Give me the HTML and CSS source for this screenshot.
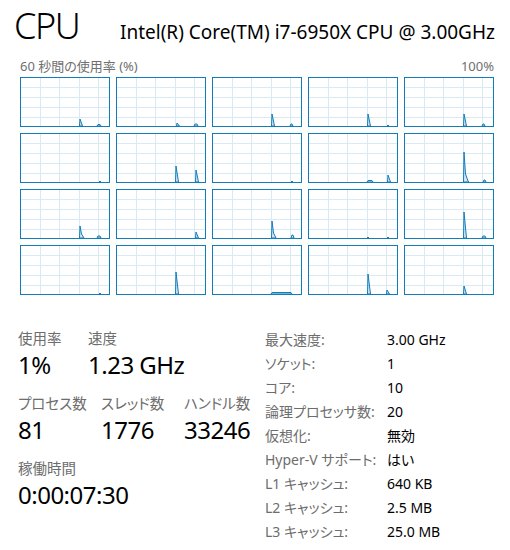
FILE: index.html
```html
<!DOCTYPE html>
<html lang="ja">
<head>
<meta charset="utf-8">
<title>CPU</title>
<link rel="stylesheet" href="styles.css">
</head>
<body>
<div class="page">
  <header class="head">
    <h1 class="title">CPU</h1>
    <div class="model">Intel(R) Core(TM) i7-6950X CPU @ 3.00GHz</div>
  </header>
  <div class="axis"><span>60 秒間の使用率 (%)</span><span>100%</span></div>
  <div class="charts">
    <div class="chart"><svg viewBox="0 0 88 48"><path d="M58.5 48L59 41L61.5 48Z M76 48L77 46.5L79 46.5L80 48Z"/></svg></div>
    <div class="chart"><svg viewBox="0 0 88 48"><path d="M59.5 48L60 45L62.5 48Z M77 48L78 46L80 46L81 48Z"/></svg></div>
    <div class="chart"><svg viewBox="0 0 88 48"><path d="M58.5 48L59 36L61.5 48Z M77 48L78 46L79 46L80 48Z"/></svg></div>
    <div class="chart"><svg viewBox="0 0 88 48"><path d="M58.5 48L59 36L61.5 48Z M78 48L79 47L80 48Z"/></svg></div>
    <div class="chart"><svg viewBox="0 0 88 48"><path d="M58.5 48L59 36L61.5 48Z M77 48L78 46L79 46L80 48Z"/></svg></div>

    <div class="chart"><svg viewBox="0 0 88 48"><path d="M78 48L79 47L80 48Z"/></svg></div>
    <div class="chart"><svg viewBox="0 0 88 48"><path d="M58.5 48L59 32L61.5 48Z M78.5 48L79 36L81.5 48Z"/></svg></div>
    <div class="chart"><svg viewBox="0 0 88 48"><path d="M78 48L79 47L80 48Z"/></svg></div>
    <div class="chart"><svg viewBox="0 0 88 48"><path d="M58 48L59 46.5L63 46.5L64 48Z M78.5 48L79 41L81.5 48Z"/></svg></div>
    <div class="chart"><svg viewBox="0 0 88 48"><path d="M58.5 48L59 18L60.5 40L63 47L64 48Z M78 48L79 46L80 46L81 48Z"/></svg></div>

    <div class="chart"><svg viewBox="0 0 88 48"><path d="M58.5 48L59 36L60.5 44L63 48Z M76 48L77 46L79 46L80 48Z"/></svg></div>
    <div class="chart"><svg viewBox="0 0 88 48"><path d="M78.5 48L79 42L81.5 48Z"/></svg></div>
    <div class="chart"><svg viewBox="0 0 88 48"><path d="M58.5 48L59 31L60.5 43L63 48Z M78 48L79 45L80 45L81 48Z"/></svg></div>
    <div class="chart"><svg viewBox="0 0 88 48"><path d="M58 48L59 47L60 48Z M78 48L79 47L80 48Z"/></svg></div>
    <div class="chart"><svg viewBox="0 0 88 48"><path d="M58.5 48L59 22L61.5 48Z M77 48L78 46L80 46L81 48Z"/></svg></div>

    <div class="chart"><svg viewBox="0 0 88 48"><path d="M78 48L79 47L80 48Z"/></svg></div>
    <div class="chart"><svg viewBox="0 0 88 48"><path d="M58.5 48L59 26L61.5 48Z"/></svg></div>
    <div class="chart"><svg viewBox="0 0 88 48"><path d="M58 48L59 46.5L78 46.5L79 48Z"/></svg></div>
    <div class="chart"><svg viewBox="0 0 88 48"><path d="M58.5 48L59 28L61.5 48Z M77.5 48L78 44L80.5 48Z"/></svg></div>
    <div class="chart"><svg viewBox="0 0 88 48"><path d="M58.5 48L59 40L61.5 48Z"/></svg></div>
  </div>

  <section class="stats">
    <div class="dyn">
      <div class="group">
        <div class="stat w70"><div class="lbl">使用率</div><div class="val">1%</div></div>
        <div class="stat"><div class="lbl">速度</div><div class="val">1.23 GHz</div></div>
      </div>
      <div class="group">
        <div class="stat w83"><div class="lbl">プロセス数</div><div class="val">81</div></div>
        <div class="stat w83"><div class="lbl">スレッド数</div><div class="val">1776</div></div>
        <div class="stat"><div class="lbl">ハンドル数</div><div class="val">33246</div></div>
      </div>
      <div class="group">
        <div class="stat"><div class="lbl">稼働時間</div><div class="val">0:00:07:30</div></div>
      </div>
    </div>
    <dl class="specs">
      <dt>最大速度:</dt><dd>3.00 GHz</dd>
      <dt>ソケット:</dt><dd>1</dd>
      <dt>コア:</dt><dd>10</dd>
      <dt>論理プロセッサ数:</dt><dd>20</dd>
      <dt>仮想化:</dt><dd>無効</dd>
      <dt>Hyper-V サポート:</dt><dd>はい</dd>
      <dt>L1 キャッシュ:</dt><dd>640 KB</dd>
      <dt>L2 キャッシュ:</dt><dd>2.5 MB</dd>
      <dt>L3 キャッシュ:</dt><dd>25.0 MB</dd>
    </dl>
  </section>
</div>
</body>
</html>
```

FILE: styles.css
```css
html, body {
  margin: 0;
  padding: 0;
  background: #ffffff;
}

body {
  font-family: "Noto Sans", "Noto Sans CJK JP", sans-serif;
  color: #000000;
  font-feature-settings: "palt";
}

.page {
  width: 510px;
  height: 550px;
  overflow: hidden;
}

.head {
  display: flex;
  align-items: baseline;
  padding: 4px 0 0 14px;
  height: 54px;
  box-sizing: border-box;
}

.title {
  margin: 0;
  font-size: 36px;
  font-weight: 300;
  letter-spacing: -1.5px;
  line-height: 44px;
  width: 106px;
}

.model {
  font-size: 19px;
  line-height: 24px;
}

.axis {
  display: flex;
  justify-content: space-between;
  margin: 4px 16px 3px 20px;
  font-size: 13px;
  line-height: 16px;
  color: #707070;
}

.charts {
  display: grid;
  grid-template-columns: repeat(5, 90px);
  grid-auto-rows: 50px;
  gap: 6px;
  margin-left: 20px;
}

.chart {
  box-sizing: border-box;
  border: 1px solid #117dbb;
  background:
    linear-gradient(#d9eaf4, #d9eaf4) 19px 0 / 1px 100% no-repeat,
    linear-gradient(#d9eaf4, #d9eaf4) 38px 0 / 1px 100% no-repeat,
    linear-gradient(#d9eaf4, #d9eaf4) 58px 0 / 1px 100% no-repeat,
    linear-gradient(#d9eaf4, #d9eaf4) 77px 0 / 1px 100% no-repeat,
    linear-gradient(#d9eaf4, #d9eaf4) 0 9px / 100% 1px no-repeat,
    linear-gradient(#d9eaf4, #d9eaf4) 0 19px / 100% 1px no-repeat,
    linear-gradient(#d9eaf4, #d9eaf4) 0 29px / 100% 1px no-repeat,
    linear-gradient(#d9eaf4, #d9eaf4) 0 39px / 100% 1px no-repeat,
    #ffffff;
}

.chart svg {
  display: block;
  width: 88px;
  height: 48px;
}

.chart path {
  fill: rgba(17, 125, 187, 0.18);
  stroke: #117dbb;
  stroke-width: 1;
  stroke-linejoin: round;
}

.stats {
  display: flex;
  margin-top: 33px;
}

.dyn {
  flex: none;
  width: 247px;
  padding-left: 18px;
  box-sizing: border-box;
}

.group {
  display: flex;
  height: 65px;
}

.stat {
  flex: none;
}

.stat.w70 { width: 70px; }
.stat.w83 { width: 83px; }

.lbl {
  font-size: 14.5px;
  line-height: 20px;
  color: #6d6d6d;
}

.val {
  margin-top: 2px;
  font-size: 24px;
  line-height: 30px;
  letter-spacing: -0.5px;
  color: #000000;
}

.specs {
  margin: 0;
  display: grid;
  grid-template-columns: 122px auto;
  grid-auto-rows: 24px;
  font-size: 14px;
  line-height: 24px;
  padding-left: 18px;
}

.specs dt {
  color: #6d6d6d;
}

.specs dd {
  margin: 0;
  color: #000000;
}
```
